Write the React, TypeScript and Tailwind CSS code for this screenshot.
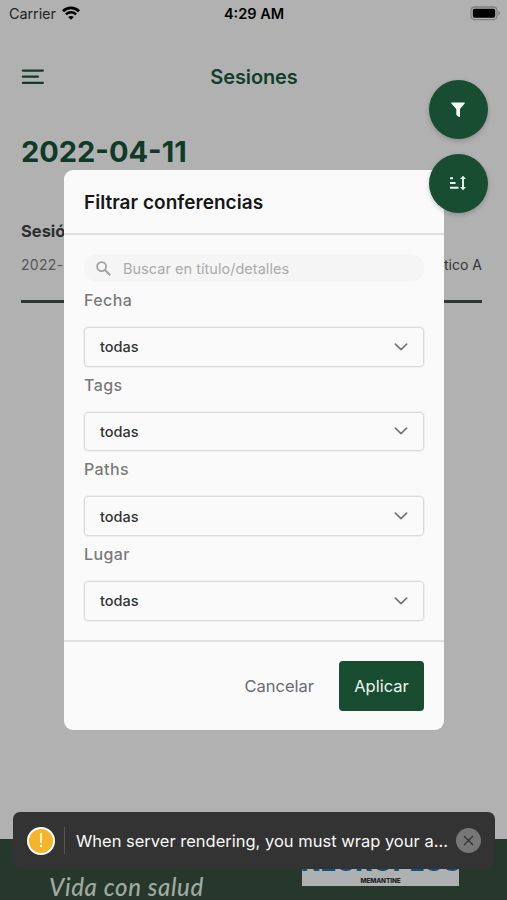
import React from "react";

const filters = ["Fecha", "Tags", "Paths", "Lugar"];

function StatusBar() {
  return (
    <div className="flex h-7 items-center justify-between pl-[9px] pr-[6px] text-black">
      <div className="flex w-[100px] items-center gap-[6px]">
        <span className="text-[14.5px] leading-5 tracking-[-0.1px] text-[#242424]">Carrier</span>
        <svg width="18" height="14" viewBox="0 0 18 14" fill="none" stroke="#000" className="-mt-[2px]">
          <path d="M1 5.2C5.5.8 12.5.8 17 5.2" strokeWidth="2.8" />
          <path d="M3.9 8.4c2.9-2.8 7.3-2.8 10.2 0" strokeWidth="2.5" />
          <path d="M9 13.8 6.2 11c1.5-1.5 4.1-1.500 5.600 0z" fill="#000" stroke="none" />
        </svg>
      </div>
      <span className="-ml-[2px] whitespace-nowrap text-[14.5px] font-semibold leading-5">4:29 AM</span>
      <div className="flex w-[100px] justify-end">
        <svg width="31" height="15" viewBox="0 0 31 15" className="-mt-[2px]">
          <rect x="1" y="1" width="26" height="12.6" rx="3.6" fill="none" stroke="#808080" strokeWidth="1.3" />
          <rect x="2.800" y="2.8" width="22.4" height="9" rx="1.8" fill="#000" />
          <path d="M28.5 5v4.6c1.8-.7 1.8-3.900 0-4.600z" fill="#777" />
        </svg>
      </div>
    </div>
  );
}

function Fab({ children }: { children: React.ReactNode }) {
  return (
    <button className="flex size-[59px] items-center justify-center rounded-full bg-[#184d31] shadow-[0_2px_5px_rgba(0,0,0,0.2)]">
      {children}
    </button>
  );
}

function FilterField({ label }: { label: string }) {
  return (
    <div className="flex h-[84.7px] flex-col">
      <div className="h-[45px] pt-[6px] text-[16px] font-medium leading-6 tracking-[0.4px] text-[#7b7b7b]">{label}</div>
      <div className="flex h-[39.5px] shrink-0 items-center justify-between rounded-[4px] border-[1.5px] border-[#dadada] pl-[15px] pr-[15px] shadow-[0_0_0_0.5px_#e4e4e4]">
        <span className="pt-px text-[14.5px] font-medium leading-5 text-[#333]">todas</span>
        <svg width="14" height="8" viewBox="0 0 14 8" fill="none" stroke="#777" strokeWidth="1.7" strokeLinecap="round" strokeLinejoin="round">
          <path d="M1.4 1.2 7 6.7l5.600-5.500" />
        </svg>
      </div>
    </div>
  );
}

function FilterDialog() {
  return (
    <div className="absolute left-16 top-[170px] flex h-[560px] w-[380px] flex-col overflow-hidden rounded-[9px] bg-[#fafafa]">
      <div className="flex h-[65px] items-center border-b-2 border-[#e0e0e0] pl-5 pt-[4px]">
        <h2 className="whitespace-nowrap text-[19px] font-semibold tracking-[0.03px] text-[#171717]">Filtrar conferencias</h2>
      </div>
      <div className="flex h-[405px] flex-col px-5 pt-[19px]">
        <div className="flex h-7 shrink-0 items-center rounded-full bg-[#f5f5f5] pl-3">
          <svg width="15" height="15" viewBox="0 0 15 15" fill="none" stroke="#a1a1a1" strokeWidth="1.700">
            <circle cx="5.600" cy="5.600" r="4.500" />
            <path d="m9 9 5.200 5.200" strokeWidth="2" />
          </svg>
          <span className="whitespace-nowrap pl-3 pt-px text-[14.5px] tracking-[0.03px] text-[#aaa]">Buscar en título/detalles</span>
        </div>
        {filters.map((label) => (
          <FilterField key={label} label={label} />
        ))}
      </div>
      <div className="flex flex-1 items-center justify-end gap-[25px] border-t-2 border-[#e0e0e0] pr-5">
        <button className="pt-px text-[16.5px] text-[#6b6b73]">Cancelar</button>
        <button className="h-[50px] w-[85px] rounded-[4px] bg-[#184d31] pt-px text-[16.5px] text-[#eef5ef]">Aplicar</button>
      </div>
    </div>
  );
}

function WarningToast() {
  return (
    <div className="absolute left-[13px] top-[812px] flex h-[57px] w-[482px] items-center rounded-[7px] bg-[#333] pl-[14px] pr-[14px]">
      <div className="flex size-[28px] shrink-0 items-center justify-center rounded-full border-[2.5px] border-white bg-[#f6b42b]">
        <svg width="4" height="15" viewBox="0 0 4 15" fill="#fff">
          <rect x="1.200" width="1.700" height="10" rx=".8" />
          <circle cx="2" cy="13" r="1.200" />
        </svg>
      </div>
      <div className="ml-[9px] h-[27px] w-px shrink-0 bg-[#555]" />
      <span className="ml-[11px] whitespace-nowrap text-[16.5px] leading-6 text-[#f7f7f7]">When server rendering, you must wrap your a...</span>
      <div className="ml-auto flex size-[25px] shrink-0 items-center justify-center rounded-full bg-[#777]">
        <svg width="11" height="11" viewBox="0 0 11 11" stroke="#333" strokeWidth="1.300">
          <path d="m1 1 9 9M10 1l-9 9" />
        </svg>
      </div>
    </div>
  );
}

export default function App() {
  return (
    <div className="relative flex h-[900px] w-[507px] flex-col overflow-hidden bg-[#b1b1b1] font-['Inter','Liberation_Sans',sans-serif]">
      <StatusBar />
      <header className="relative flex h-[98px] items-center justify-center">
        <svg width="24" height="18" viewBox="0 0 24 18" stroke="#103b29" strokeWidth="2.3" strokeLinecap="round" className="absolute left-[21px] top-10">
          <path d="M1.900 2.600h20M1.900 8.700h15M1.900 14.800h20" />
        </svg>
        <h1 className="ml-px whitespace-nowrap text-[20px] font-semibold tracking-[-0.1px] text-[#123e2b]">Sesiones</h1>
      </header>
      <main className="flex-1 pl-[21px] pr-[25px]">
        <h2 className="pt-[8px] text-[29px] font-bold leading-9 text-[#103a28]">2022-04-11</h2>
        <div className="mt-[49px] text-[16.500px] font-bold leading-6 text-[#2b2e32]">Sesión</div>
        <div className="mt-[12px] flex justify-between text-[14px] leading-5">
          <span className="tracking-[0.3px] text-[#55585a]">2022-04-11</span>
          <span className="text-[#333638]">Atlántico A</span>
        </div>
        <div className="mt-[25px] h-[2.500px] bg-[#303536]" />
      </main>
      <footer className="flex h-[61px] items-start bg-[#26382b]">
        <div className="ml-[49px] flex w-[253px] flex-col whitespace-nowrap font-['Lato',sans-serif] text-[24px] font-medium italic tracking-[0.65px] text-[#a1aaa0]">
          <span className="h-[36px] pt-[8px] leading-6">Por una buena</span>
          <span className="leading-6">Vida con salud</span>
        </div>
        <div className="flex h-[47px] w-[157px] flex-col items-center overflow-hidden bg-[#aeb0b1]">
          <span className="mt-[10px] whitespace-nowrap font-['Inter'] text-[26px] font-extrabold leading-[26px] text-[#075581]">NEUROPLUS</span>
          <span className="mt-[2px] text-[6.500px] font-extrabold leading-[8px] tracking-[-0.15px] text-[#242424]">MEMANTINE</span>
        </div>
      </footer>
      <FilterDialog />
      <div className="absolute left-[428.500px] top-[80px] flex flex-col gap-[14.500px]">
        <Fab>
          <svg width="14" height="16" viewBox="0 0 14 16" fill="#f5fbf5">
            <path d="M.7.5h12.600c.5 0 .7.500.4.900L9 7v7.300c0 .7-.6 1-1.100.6L5.700 13.300a1 1 0 0 1-.4-.8V7L.4 1.400C.1 1 .2.500.7.500z" />
          </svg>
        </Fab>
        <Fab>
          <svg width="18" height="16" viewBox="0 0 18 16" fill="none" stroke="#e8f5e8" strokeWidth="1.900">
            <path d="M1 3.200h3M1 8h5.500M1 12.800h8.500M14 2v12" />
            <path d="m11 4L14 .7l3 3.300zM11 12 14 15.300l3-3.300z" fill="#e8f5e8" stroke="none" />
          </svg>
        </Fab>
      </div>
      <WarningToast />
    </div>
  );
}
